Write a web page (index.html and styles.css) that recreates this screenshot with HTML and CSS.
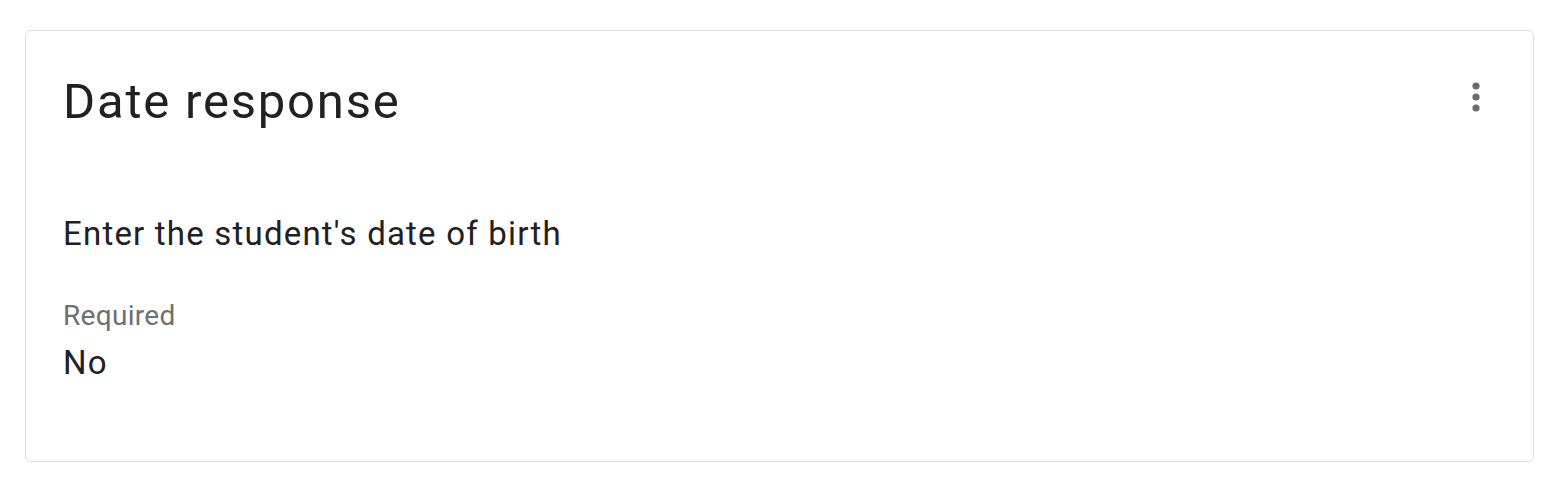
FILE: index.html
```html
<!DOCTYPE html>
<html lang="en">

<head>
    <meta charset="UTF-8">
    <meta name="viewport" content="width=device-width, initial-scale=1.0">
    <title>Date response</title>
    <link rel="stylesheet" href="styles.css">
</head>

<body>
    <div class="card">
        <div class="card-header">
            <h1 class="card-title">Date response</h1>
            <button class="menu-btn" aria-label="More options">
                <svg width="44" height="44" viewBox="0 0 44 44">
                    <circle cx="22" cy="11" r="3.6" />
                    <circle cx="22" cy="22" r="3.6" />
                    <circle cx="22" cy="33" r="3.6" />
                </svg>
            </button>
        </div>

        <p class="question">Enter the student's date of birth</p>

        <div class="field">
            <div class="field-label">Required</div>
            <div class="field-value">No</div>
        </div>
    </div>
</body>

</html>
```

FILE: styles.css
```css
body {
    margin: 0;
    padding: 30px 26px 30px 25px;
    background: #ffffff;
    font-family: Roboto, 'Noto Sans', sans-serif;
    color: #212121;
}

.card {
    border: 1px solid #dcdcdc;
    border-radius: 6px;
    padding: 43px 35px 76px 37px;
    background: #ffffff;
}

.card-header {
    display: flex;
    justify-content: space-between;
    align-items: flex-start;
}

.card-title {
    margin: 0;
    font-size: 49px;
    line-height: 56px;
    font-weight: 400;
    letter-spacing: 1.8px;
    color: #212121;
}

.menu-btn {
    background: none;
    border: none;
    padding: 0;
    margin-top: 1px;
    cursor: pointer;
    display: flex;
}

.menu-btn svg {
    fill: #6b6b6b;
}

.question {
    margin: 80px 0 0;
    font-size: 33px;
    line-height: 48px;
    letter-spacing: 1.2px;
}

.field {
    margin-top: 38px;
}

.field-label {
    font-size: 28px;
    line-height: 40px;
    color: #6f6f6f;
    letter-spacing: 0.3px;
}

.field-value {
    margin-top: 5px;
    font-size: 33px;
    line-height: 44px;
    letter-spacing: 1.2px;
}
```
